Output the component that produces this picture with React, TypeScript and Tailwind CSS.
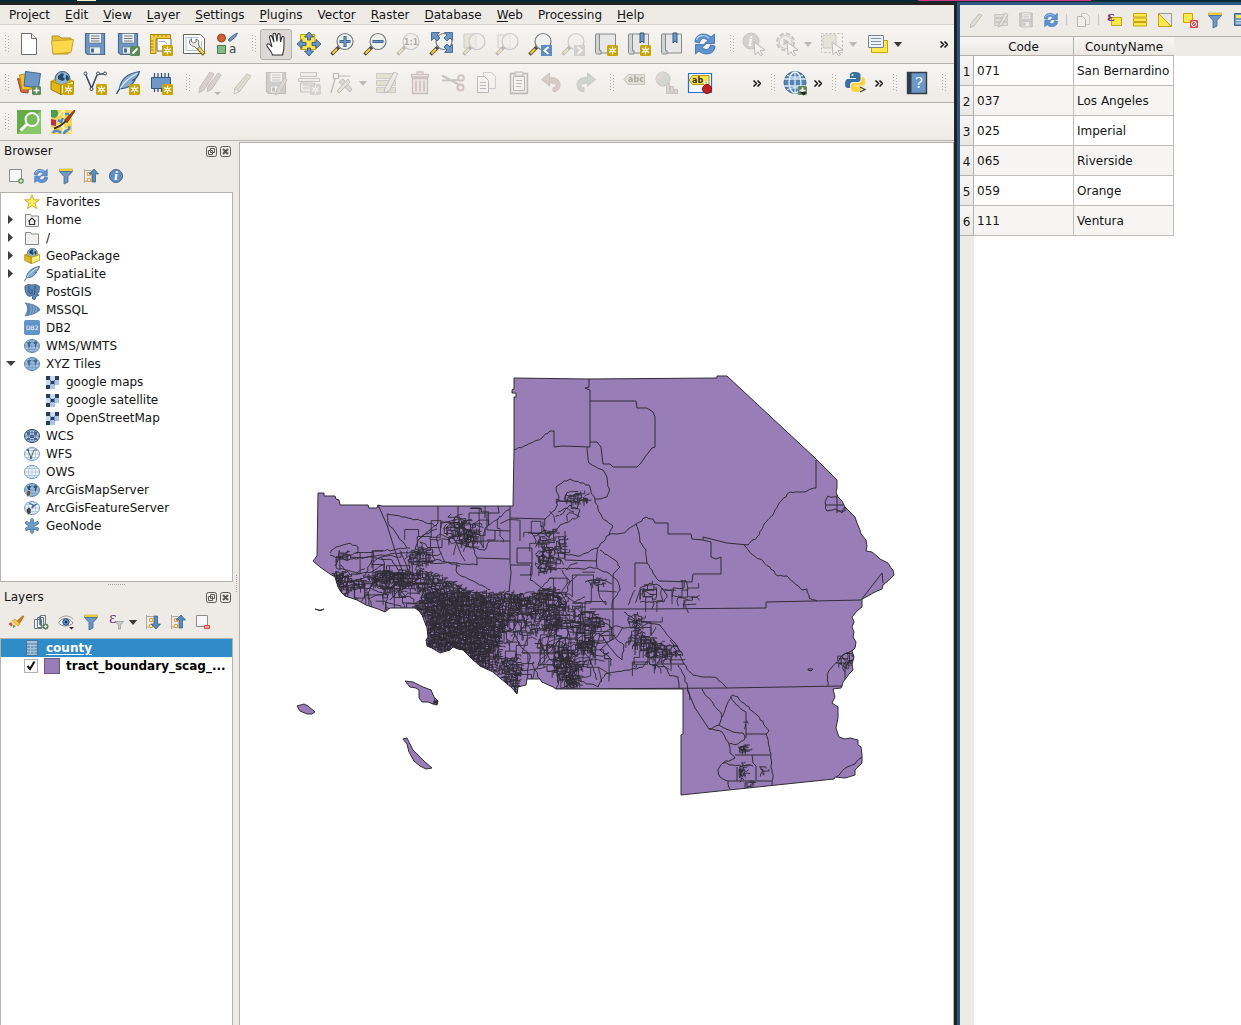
import React from "react";

type Pt = [number, number];
type Kids = { children?: React.ReactNode };

/* ---------- icon primitives ---------- */

function I({ children, s = 24 }: Kids & { s?: 24 | 16 }) {
  return (
    <svg viewBox={s === 24 ? "0 0 24 24" : "0 0 16 16"} className={"shrink-0 overflow-visible " + (s === 24 ? "size-6" : "size-4")} fill="none" aria-hidden="true">
      {children}
    </svg>
  );
}

const Star = () => (
  <g>
    <rect x="13" y="13" width="11" height="11" rx="1.5" fill="#c8a406" />
    <path d="M18.5 14.5v8M15 16.5l7 4M22 16.5l-7 4" stroke="#fff" strokeWidth="1.3" />
    <circle cx="18.5" cy="18.5" r="1.8" fill="#fff" />
    <circle cx="18.5" cy="18.5" r="0.8" fill="#c8a406" />
  </g>
);
const Plus = () => (
  <g>
    <rect x="15" y="15" width="9" height="9" rx="1.5" fill="#5a8c5a" />
    <path d="M19.5 16.5v6M16.5 19.5h6" stroke="#fff" strokeWidth="1.6" />
  </g>
);
const Lens = ({ clear }: { clear?: boolean }) => (
  <g>
    <path d="M9 15l-7.500 7.500" stroke="#4c4c4c" strokeWidth="3.600" />
    <path d="M7 17l-4.500 4.500" stroke="#fcc92b" strokeWidth="2.200" />
    <circle cx="15" cy="9.500" r="8" fill={clear ? "#f1efec" : "#eef0ee"} fillOpacity={clear ? 0.6 : 1} stroke="#777b7c" strokeWidth="1.2" />
  </g>
);
const Floppy = () => (
  <g>
    <path d="M2.500 1.500h19v21h-17l-2-2z" fill="#6d97c4" stroke="#4b6c90" strokeWidth="1.2" />
    <path d="M6 1.500h12.500v9.500h-12.500z" fill="#eef1f3" stroke="#4b6c90" strokeWidth=".6" />
    <path d="M8 4h8.500M8 6.500h8.500M8 9h8.500" stroke="#777" strokeWidth="1" />
    <path d="M6.500 15h11v7h-11z" fill="#eceeee" stroke="#4b6c90" strokeWidth=".6" />
    <path d="M8 16.500h3v4h-3z" fill="#4b6c90" />
  </g>
);
const Globe16 = ({ fill, line, land }: { fill: string; line: string; land?: string }) => (
  <g>
    <ellipse cx="8" cy="8" rx="7.5" ry="6.500" fill={fill} stroke={line} strokeWidth="1" />
    <path d="M.5 8h15M2 4.500h12M2 11.500h12M8 1.500v13" stroke={line} strokeWidth=".6" opacity=".7" />
    <ellipse cx="8" cy="8" rx="3.600" ry="6.500" stroke={line} strokeWidth=".6" opacity=".7" />
    {land && <path d="M3 5l2.500-1.500 2 1-1.500 1.500.5 2-1.500 2.500-1-3zM9.500 4l2.500-1 1.500 2-1 1.500-.5 3-1.500-1 .5-2-1.500-1z" fill={land} />}
  </g>
);
const Box = () => (
  <g>
    <circle cx="12.500" cy="8" r="7.500" fill="#8fb3d6" stroke="#375572" strokeWidth="1" />
    <path d="M8 5l4-3 2 1-1 3 2 2-2 2-3-1-2-1zM16 4l2.500 1 .5 4-2 1-1.500-3z" fill="#294866" />
    <path d="M1 10l10 4v9.500L1 18.500z" fill="#e2b814" stroke="#8b6c05" strokeWidth=".9" />
    <path d="M11 14l12.500-4v8.500L11 23.500z" fill="#fdf07b" stroke="#8b6c05" strokeWidth=".9" />
    <path d="M1 10l3.500-2c2 4 6 5 8 5l-1.500 1zM11 14l1.500-1c3-.5 6-2 7.500-5l3.500 2z" fill="#d0a60e" />
  </g>
);
const Feather = () => (
  <g>
    <path d="M.5 23C3 18 7 13 13 8" stroke="#2b4a6b" strokeWidth="1.300" />
    <path d="M23.500.5C14 2 5 7 3.500 17.500c8 .5 13-3.500 15.500-8.500l-3 .5c4-1.500 6.500-5 7.500-9z" fill="#84abd3" stroke="#375c84" strokeWidth="1.200" />
    <path d="M4 17.500C8 11 14 6 21 2.500" stroke="#e3edf6" strokeWidth="1.100" />
  </g>
);
const Pencil = () => (
  <g>
    <path d="M16 3l4 2L9 20l-6 3 1-6z" fill="#c9c38f" stroke="#666" />
    <path d="M3 23l1-5 4 2z" fill="#eee" stroke="#666" strokeWidth=".6" />
    <path d="M16 6L6 19" stroke="#8a8557" />
  </g>
);
const RefreshShape = () => (
  <g>
    <path d="M2 10C2 1 13 0 18 5l3.500-3v9.500h-10l3.500-3C10 4.500 7.500 7 6.500 11z" fill="#5c93d0" stroke="#376ba6" strokeWidth=".8" />
    <path d="M22 14c0 9-11 10-16 5l-3.500 3v-9.500h10l-3.500 3c5 4 7.500 1.500 8.500-2.500z" fill="#5c93d0" stroke="#376ba6" strokeWidth=".8" />
    <path d="M3.500 8C5 3 12 2 16 6" stroke="#b7d3ef" strokeWidth="1.2" />
  </g>
);
const Book = ({ mark }: { mark?: boolean }) => (
  <g>
    <path d="M5 2h16.500v19H5z" fill="#e6e7e6" stroke="#84898a" />
    <path d="M2 2h3.500v16.500H7V22H3c-1 0-1.500-1-1.500-2V3z" fill="#d2d4d3" stroke="#84898a" />
    {mark && <path d="M13 1h4v10l-2-2-2 2z" fill="#6d97c4" stroke="#34577f" />}
  </g>
);
const Cursor = () => <path d="M12 10l11 8-5 .8 2.500 4-2 1-2.500-4-3 3z" fill="#fff" stroke="#555" strokeWidth="1" />;
const FunnelShape = () => (
  <g>
    <path d="M1.500 1h13v2h-13z" fill="#fbe34b" stroke="#b39d1c" strokeWidth=".6" />
    <path d="M1.500 3.500h13L10 8.500V14l-4 2V8.500z" fill="#6d97c4" stroke="#41678f" strokeWidth=".8" />
  </g>
);
const Scratch = ({ up }: { up?: boolean }) => (
  <g>
    <path d="M1.500 1v14M1.500 2.500h7M1.500 13h4" stroke="#a9a9a9" />
    <path d="M4.500 4.500h3v3h-3zM4.500 10.500h3v3h-3z" fill="#fff0d8" stroke="#f09a2c" />
    {up ? (
      <path d="M11 1l4.500 5h-3v8h-3.500V6h-3z" fill="#5b8cc0" stroke="#2e537b" strokeWidth=".7" />
    ) : (
      <path d="M11 15l4.500-5h-3V2h-3.500v8h-3z" fill="#5b8cc0" stroke="#2e537b" strokeWidth=".7" />
    )}
  </g>
);

/* ---------- toolbar building blocks ---------- */

const Grip = () => (
  <svg viewBox="0 0 5 18" className="mr-1 h-[18px] w-[5px] shrink-0" aria-hidden="true">
    {[0, 3, 6, 9, 12, 15].map((y) => (
      <g key={y} fill="#b3afab">
        <rect x="1" y={y} width="1" height="1" />
        <rect x="4" y={y + 1} width="1" height="1" />
      </g>
    ))}
  </svg>
);

const Caret = ({ dim }: { dim?: boolean }) => (
  <svg viewBox="0 0 10 6" className="h-[5px] w-[10px] shrink-0" aria-hidden="true">
    <path d="M0 0h10L5 6z" fill={dim ? "#bdbab7" : "#3a3a3a"} />
  </svg>
);

function Tool({ label, off, on, menu, children }: Kids & { label: string; off?: boolean; on?: boolean; menu?: boolean }) {
  return (
    <button type="button" aria-label={label} title={label} disabled={off} className={"flex h-[33px] shrink-0 items-center " + (menu ? "w-[45px]" : "w-[33px]")}>
      <span className={"flex h-[31px] w-8 shrink-0 items-center justify-center rounded-[3px] border " + (on ? "border-[#b4b0ac] bg-[#dcd8d5]" : "border-transparent")}>
        <span className={off ? "opacity-35 saturate-50" : ""}>
          <I>{children}</I>
        </span>
      </span>
      {menu && <Caret dim={off} />}
    </button>
  );
}

const More = () => (
  <button type="button" aria-label="More tools" className="flex w-3 shrink-0 justify-center">
    <svg viewBox="0 0 8 7" className="h-[7px] w-2" fill="none" stroke="#111" strokeWidth="1.5" aria-hidden="true">
      <path d="M.5.5l3 3-3 3M4.500.5l3 3-3 3" />
    </svg>
  </button>
);

const Group = ({ children, grow }: Kids & { grow?: boolean }) => <div className={"flex items-center " + (grow ? "min-w-0 flex-1" : "shrink-0")}>{children}</div>;
const Bar = ({ children, short }: Kids & { short?: boolean }) => (
  <div className={"flex shrink-0 items-center gap-[7px] overflow-hidden border-b border-[#b5b1ad] bg-linear-to-b from-[#f7f5f2] to-[#eeebe7] pr-1 pl-1 " + (short ? "h-[38px]" : "h-[39px]")}>{children}</div>
);

function Small({ label, off, children }: Kids & { label: string; off?: boolean }) {
  return (
    <button type="button" aria-label={label} title={label} disabled={off} className={"flex h-6 w-[25px] shrink-0 items-center justify-center " + (off ? "opacity-35 saturate-50" : "")}>
      <I s={16}>{children}</I>
    </button>
  );
}

/* ---------- toolbars ---------- */

function FileBar() {
  return (
    <Bar>
      <Group>
        <Grip />
        <Tool label="New Project"><path d="M4.500 1.500h10l5 5v16h-15z" fill="#fff" stroke="#6a6a6a" /><path d="M14.500 1.500v5h5" fill="#eee" stroke="#6a6a6a" /></Tool>
        <Tool label="Open Project"><path d="M2 4h7l2 2h10v4L18 22H3z" fill="#e9bd38" stroke="#b38f23" /><path d="M1.500 9L23.500 7.500 21 20.500 3 22z" fill="#fcd94b" stroke="#caa12b" /></Tool>
        <Tool label="Save Project"><Floppy /></Tool>
        <Tool label="Save Project As"><Floppy /><rect x="14" y="14" width="10" height="10" rx="1.500" fill="#5a8c5a" /><path d="M16.500 21.500l5-5" stroke="#fff" strokeWidth="2" /></Tool>
        <Tool label="New Print Layout"><path d="M8 4h11l3 3v12H8z" fill="#fff" stroke="#666" /><path d="M1.500 2.500h20v4H7v15H1.500z" fill="#f7cf45" stroke="#a98516" /><path d="M5 3v2M9 3v2M13 3v2M17 3v2M2 9h2.500M2 12h2.500M2 15h2.500M2 18h2.500" stroke="#8b6c05" strokeWidth=".8" /><path d="M10 9.500h6l2 2.500" stroke="#9db4cc" /><Star /></Tool>
        <Tool label="Show Layout Manager"><path d="M1.500 2.500h17l4 4v15h-21z" fill="#fff" stroke="#666" /><path d="M4 5.500h13M4 18.500h12M4 5.500v13M19.500 9v8" stroke="#a9c5e8" /><path d="M14 13l8 9.500" stroke="#7a610b" strokeWidth="4" /><path d="M15 14l6.500 7.500" stroke="#f1d45b" strokeWidth="2.500" /><path d="M9.500 6.500v3l2 1.500 2.500-1v-3c2.500.5 3.500 3 2.500 5l1 3-2.500 2-2.500-2.500c-3 0-5.500-2.500-5-5 .2-1.500 1-2.500 2-3z" fill="#ecedeb" stroke="#666" strokeWidth=".9" /></Tool>
        <Tool label="Style Manager"><circle cx="6.500" cy="6" r="4" fill="#cd5c34" stroke="#a04425" /><path d="M22.500 1l-2 4-5.500 4.500-2-1.500 5.500-5z" fill="#6d97c4" stroke="#375c84" strokeWidth=".8" /><path d="M2.500 13.500h8v8h-8z" fill="#8ab88e" stroke="#4a7a50" /><text x="14" y="21" fontSize="12" fill="#444" className="font-[DejaVu_Sans]">a</text></Tool>
      </Group>
      <Group>
        <Grip />
        <Tool label="Pan Map" on><path d="M8.500 23c-1-4-4-6-5.500-9-.8-1.800 1.200-3 2.600-1.600L8 15 5.500 5.500c-.4-2 1.900-2.500 2.500-.8L10 10 9 3c-.2-2 2.500-2.300 2.800-.4L13 9.500 13.500 3c.2-2 2.600-1.800 2.600.1L16.500 10l1.300-4.500c.5-1.700 2.500-1.200 2.300.5-.8 5 1.400 8-1.600 17z" fill="#fff" stroke="#333" strokeWidth="1.100" /></Tool>
        <Tool label="Pan Map to Selection"><path d="M3.500 2.500h14l1 15h-15z" fill="#fbe34b" stroke="#c8a406" /><path d="M12 0l4.500 5h-3v3h-3V5h-3zM12 24l4.500-5h-3v-3h-3v3h-3zM0 12l5-4.500v3h4v3H5v3zM24 12l-5-4.500v3h-4v3h4v3z" fill="#6d97c4" stroke="#34577f" strokeWidth=".9" /></Tool>
        <Tool label="Zoom In"><Lens /><path d="M15 4v11M9.500 9.500h11" stroke="#34577f" strokeWidth="3" /><path d="M15 4.500v10M10 9.500h10" stroke="#6d97c4" strokeWidth="1.600" /></Tool>
        <Tool label="Zoom Out"><Lens /><path d="M9.500 9.500h11" stroke="#34577f" strokeWidth="3" /><path d="M10 9.500h10" stroke="#6d97c4" strokeWidth="1.600" /></Tool>
        <Tool label="Zoom to Native Resolution" off><Lens /><text x="8" y="13" fontSize="8" fontWeight="bold" fill="#333" className="font-[DejaVu_Sans]">1:1</text></Tool>
        <Tool label="Zoom Full"><Lens /><path d="M2.500.5h8L8 3l3 3-3 3-3-3-2.500 2.500zM23.500.5v8L21 6l-3 3-3-3 3-3-2.500-2.500zM23.500 20.500h-8L18 18l-3-3 3-3 3 3 2.500-2.500z" fill="#6d97c4" stroke="#34577f" strokeWidth=".8" /></Tool>
        <Tool label="Zoom to Selection" off><path d="M2 2h12v14H2z" fill="#d3ce9f" stroke="#888" /><Lens clear /></Tool>
        <Tool label="Zoom to Layer" off><path d="M3 3h12v13H3z" fill="#eee" stroke="#888" /><Lens clear /></Tool>
        <Tool label="Zoom Last"><Lens /><path d="M13 13h11v11H13z" fill="#5d8dc2" /><path d="M20.500 15l-4 3.500 4 3.500" stroke="#fff" strokeWidth="2" /></Tool>
        <Tool label="Zoom Next" off><Lens /><path d="M13 13h11v11H13z" fill="#999" /><path d="M16.500 15l4 3.500-4 3.500" stroke="#fff" strokeWidth="2" /></Tool>
        <Tool label="New Map View"><Book /><Star /></Tool>
        <Tool label="New Spatial Bookmark"><Book mark /><Star /></Tool>
        <Tool label="Show Spatial Bookmarks"><Book mark /></Tool>
        <Tool label="Refresh"><RefreshShape /></Tool>
      </Group>
      <Group>
        <Grip />
        <Tool label="Identify Features" off><circle cx="9" cy="9" r="8" fill="#999" stroke="#777" /><text x="6" y="14" fontSize="13" fontStyle="italic" fontWeight="bold" fill="#fff" className="font-[DejaVu_Serif]">i</text><Cursor /></Tool>
        <Tool label="Run Feature Action" off menu><circle cx="10.500" cy="10" r="8.500" stroke="#777" strokeWidth="2" strokeDasharray="4.500 2.200" fill="#e6e6e6" /><circle cx="10.500" cy="10" r="6.500" fill="#e6e6e6" stroke="#777" /><path d="M8.500 6.500l6 3.500-6 3.500z" fill="#777" /><Cursor /></Tool>
        <Tool label="Select Features" off menu><path d="M1.500 1.500h21v19h-21z" stroke="#555" strokeDasharray="2 2" /><path d="M3 3h13v13H3z" fill="#d3ce9f" stroke="#888" /><Cursor /></Tool>
        <Tool label="Map Tips" menu><path d="M6.500 8.500h16v12h-16z" fill="#fde94b" stroke="#c8a406" /><path d="M3.500 3.500h15v12h-15z" fill="#eef2f5" stroke="#7b8590" /><path d="M6 6.500h10M6 9.500h10M6 12.500h10" stroke="#8293a3" /></Tool>
      </Group>
      <div className="ml-auto"><More /></div>
    </Bar>
  );
}

function EditBar() {
  return (
    <Bar>
      <Group>
        <Grip />
        <Tool label="Data Source Manager"><path d="M.5 7.500L12 10l-1 12-7-1z" fill="#d9643a" stroke="#a04425" /><path d="M2.500 4L15 2l1 16-11 1z" fill="#f4c22d" stroke="#b38f23" /><path d="M8.500.5l15 2L21.500 17 7 15z" fill="#6d97c4" stroke="#41678f" /><Plus /></Tool>
        <Tool label="New GeoPackage Layer"><Box /><Star /></Tool>
        <Tool label="New Shapefile Layer"><path d="M2.500 3l6 14.500L14 4M14 3h8" stroke="#34495e" strokeWidth="1.500" /><g fill="#fff" stroke="#34495e"><circle cx="2.500" cy="2.500" r="1.500" /><circle cx="8.500" cy="18" r="1.500" /><circle cx="15" cy="2.500" r="1.500" /><circle cx="22" cy="2.500" r="1.500" /></g><Star /></Tool>
        <Tool label="New SpatiaLite Layer"><Feather /><Star /></Tool>
        <Tool label="New Temporary Scratch Layer"><path d="M5.500 2v19M9 2v19M12.500 2v19M16 2v19M19.500 2v19" stroke="#34577f" strokeWidth="1.300" /><path d="M2.500 6.500h19v11h-19z" fill="#6d97c4" stroke="#34577f" /><Star /></Tool>
      </Group>
      <Group>
        <Grip />
        <Tool label="Current Edits" off><path d="M12 1l4 2L6 19l-5 3 1-6z" fill="#b78f8f" stroke="#666" /><path d="M20 2l3 2-9 14-5 3 1-6z" fill="#b78f8f" stroke="#666" /><path d="M16 21h7l-3.500 3z" fill="#444" /></Tool>
        <Tool label="Toggle Editing" off><Pencil /></Tool>
        <Tool label="Save Layer Edits" off><g className="grayscale"><Floppy /></g><path d="M20 7l3 2-7 13-5 2 2-6z" fill="#c9a38f" stroke="#666" /></Tool>
        <Tool label="Add Feature" off><path d="M3.500 1.500h16v4h-16zM1.500 7.500h21v3h-21zM3.500 12h14v9h-14z" fill="#e5e4d6" stroke="#777" /><path d="M6 14h9M6 17h9" stroke="#777" /><g className="grayscale"><Star /></g></Tool>
        <Tool label="Vertex Tool" off menu><path d="M3.500 2.500h5v5h-5zM8.500 5h12M5 8L1 22" stroke="#555" strokeWidth="1.200" /><path d="M9 11l4-3 9 10-2 3z" fill="#aaa" stroke="#666" /><path d="M18 8l2 3-11 11-2-2z" fill="#d3ce9f" stroke="#666" /></Tool>
        <Tool label="Modify Attributes" off><path d="M1.500 2.500h19v5h-19zM1.500 9.500h19v5h-19zM1.500 16.500h19v5h-19z" fill="#c9c38f" stroke="#888" /><path d="M19 1l4 2-9 17-5 2 1-5z" fill="#ddd" stroke="#666" /></Tool>
        <Tool label="Delete Selected" off><path d="M4.500 7.500h15v15h-15zM3.500 3.500h17v2.500h-17zM9 3V1h6v2" fill="#ecd5d5" stroke="#99636a" strokeWidth="1.300" /><path d="M8 9.500v11M12 9.500v11M16 9.500v11" stroke="#99636a" strokeWidth="1.600" /></Tool>
        <Tool label="Cut Features" off><path d="M1 4.500l17 9M1 9.500L17 9" stroke="#777" strokeWidth="2.200" /><circle cx="20" cy="7" r="2.800" stroke="#a36e6e" strokeWidth="2" /><circle cx="19.500" cy="16.500" r="3" stroke="#a36e6e" strokeWidth="2" /></Tool>
        <Tool label="Copy Features" off><path d="M9.500 1.500h8l4 4v12h-12z" fill="#f4f4f4" stroke="#888" /><path d="M3.500 5.500h7l4 4v12h-11z" fill="#f8f8f8" stroke="#555" /><path d="M6 11.500h6M6 14.500h6M6 17.500h6" stroke="#555" /></Tool>
        <Tool label="Paste Features" off><path d="M3.500 2.500h17v20h-17z" fill="#dededb" stroke="#555" strokeWidth="1.400" /><path d="M6.500 5.500h11v14h-11z" fill="#f8f8f8" stroke="#555" /><path d="M8 1h8v4H8zM9 9.500h6M9 12.500h6M9 15.500h5" fill="#ddd" stroke="#555" /></Tool>
        <Tool label="Undo" off><path d="M1.500 8.500l8-6.500V6.500c8-.5 11 4 10.500 8-.5 5-4 6.500-7 6v-4c2 .5 3-.5 3-2-.5-2-3-2.500-6.500-2.500V15z" fill="#bd8378" stroke="#9d665c" /></Tool>
        <Tool label="Redo" off><path d="M22.500 8.500l-8-6.500V6.500c-8-.5-11 4-10.500 8 .5 5 4 6.500 7 6v-4c-2 .5-3-.5-3-2 .5-2 3-2.500 6.500-2.500V15z" fill="#86a195" stroke="#6d877b" /></Tool>
      </Group>
      <Group grow>
        <Grip />
        <Tool label="Layer Labeling Options" off><path d="M2 8.500l4-5h16.500v10H6z" fill="#c9c38f" stroke="#777" /><text x="6" y="11" fontSize="8" fontWeight="bold" fill="#222" className="font-[DejaVu_Sans]">abc</text></Tool>
        <Tool label="Layer Diagram Options" off><circle cx="8" cy="8" r="7" fill="#8fae95" stroke="#777" /><path d="M8 8V1a7 7 0 0 0-6 10z" fill="#d0a09a" /><path d="M11.500 12.500h3v10h-3zM15.500 15.500h3v7h-3zM19.500 18.500h3v4h-3z" fill="#c9a09a" stroke="#777" /></Tool>
        <Tool label="Pin or Unpin Labels"><path d="M.5 2.500h23v19H.5z" fill="#f5f8fc" stroke="#2372d5" strokeWidth="1.200" /><path d="M1 9L4.500 4.500H21v9H4.500z" fill="#fbe34b" stroke="#b3990f" /><text x="4" y="12" fontSize="8" fontWeight="bold" fill="#333" className="font-[DejaVu_Sans]">ab</text><path d="M18 9.500v6" stroke="#fff" strokeWidth="3" /><path d="M18 9.500v6" stroke="#999" /><circle cx="19" cy="18" r="4.500" fill="#c02020" stroke="#8b1212" /></Tool>
        <div className="ml-auto"><More /></div>
      </Group>
      <Group>
        <Grip />
        <Tool label="MetaSearch"><circle cx="12" cy="11.500" r="11" fill="#5585b8" stroke="#41678f" /><path d="M1 8h22M1 15h22M12 1v21M4 4c5 3 11 3 16 0M4 19c5-3 11-3 16 0" stroke="#dce8f3" strokeWidth="1.300" /><ellipse cx="12" cy="11.500" rx="6" ry="10.500" stroke="#e8eff6" strokeWidth="1.300" /><Plus /><path d="M17 21h7l-3.500 3.500z" fill="#222" /></Tool>
        <More />
      </Group>
      <Group>
        <Grip />
        <Tool label="Python Console"><path d="M11 1c-5 0-5 2-5 3v3h6v1H4c-2 0-3 2-3 5s1 4 3 4h2v-3c0-2 1-3 3-3h5c1.500 0 2.500-1 2.500-2.500V4c0-2-2-3-5.500-3z" fill="#3771a2" /><circle cx="8.500" cy="4" r="1" fill="#fff" /><path d="M12 21c5 0 5-2 5-3v-2.500h-6v-1h8c2 0 2-2 2-4.500s-1-4-2-4h-1.500v3c0 2-1 3-3 3h-5C8 12 7 13 7 14.500V18c0 2 2 3 5 3z" fill="#fdd33e" /><path d="M16 16l5 2.500-5 2.500" stroke="#444" strokeWidth="1.300" /></Tool>
        <More />
      </Group>
      <Group>
        <Grip />
        <Tool label="Help Contents"><path d="M2.500 1.500h19v21h-19z" fill="#6d97c4" stroke="#353d46" strokeWidth="1.400" /><path d="M2.500 1.500h4v21h-4z" fill="#2e3d4c" /><text x="10" y="17" fontSize="15" fill="#fff" className="font-[DejaVu_Serif]">?</text></Tool>
      </Group>
      <Grip />
    </Bar>
  );
}

function PluginBar() {
  return (
    <Bar short>
      <Group>
        <Grip />
        <Tool label="QuickMapServices Search"><path d="M0 0h24v24H0z" fill="#64aa48" /><path d="M0 24L24 0v24z" fill="#86c767" /><path d="M10.500 13.500l-7 7" stroke="#fff" strokeWidth="3" /><circle cx="15" cy="9.500" r="6.500" fill="#79b95c" stroke="#fff" strokeWidth="2" /></Tool>
        <Tool label="OpenStreetMap Plugin"><path d="M1 0h21v24H1z" fill="#f8d454" /><path d="M1 0h6l2 5-4 3-4-1z" fill="#4a9e50" /><path d="M1 9l5 1v6l-5-1z" fill="#b72d54" /><path d="M8 6l5-6M1 20l8-5 13 8M14 0l-1 24" stroke="#fff3b8" strokeWidth="1.500" /><path d="M8 10l3 2 2-4M3 23c2-4 6-2 8 0M14 24c0-5 7-2 5-8M15 4h4" stroke="#4d89d8" strokeWidth="2.500" /><path d="M24.500 0L14.500 10l2.500 2.500L25 1z" fill="#a8481a" stroke="#7c2e0a" /><path d="M16 11l-6 5-6 2.500" stroke="#3c3530" strokeWidth="2" /></Tool>
      </Group>
    </Bar>
  );
}

/* ---------- menu ---------- */

const MENU: [string, string, string][] = [
  ["Pro", "j", "ect"], ["", "E", "dit"], ["", "V", "iew"], ["", "L", "ayer"], ["", "S", "ettings"], ["", "P", "lugins"],
  ["Vect", "o", "r"], ["", "R", "aster"], ["", "D", "atabase"], ["", "W", "eb"], ["Pro", "c", "essing"], ["", "H", "elp"],
];

/* ---------- left panels ---------- */

function PanelTitle({ children }: Kids) {
  return (
    <div className="flex h-[21px] shrink-0 items-center pr-0.5 pl-1">
      <h2 className="flex-1">{children}</h2>
      <div className="flex gap-[3px]">
        <button type="button" aria-label="Float panel">
          <svg viewBox="0 0 11 11" className="size-[11px]" fill="none" stroke="#5c5955" aria-hidden="true"><rect x=".5" y=".5" width="10" height="10" rx="2" /><path d="M4.500 2.500h4v4h-4zM2.500 4.500h4v4h-4z" /></svg>
        </button>
        <button type="button" aria-label="Close panel">
          <svg viewBox="0 0 11 11" className="size-[11px]" fill="none" stroke="#5c5955" aria-hidden="true"><rect x=".5" y=".5" width="10" height="10" rx="2" /><path d="M3 3l5 5M8 3l-5 5" strokeWidth="2" /></svg>
        </button>
      </div>
    </div>
  );
}

const Tiles = () => (
  <svg viewBox="0 0 13 13" className="size-[13px] shrink-0" aria-hidden="true">
    <path d="M0 0h13v13H0z" fill="#a9c4e6" />
    <path d="M5 0h4v4H5zM0 4h5v5H0z" fill="#c9dcf2" />
    <path d="M0 0h4v4H0zM9 0h4v4H9zM0 9h4v4H0zM5 5h3v3H5z" fill="#2c3e50" />
    <path d="M9 9h4v4H9z" fill="#fff" />
    <path d="M4 4h1v5H4zM8 4h1v5H8z" fill="#6d8fb5" />
  </svg>
);

const BLUE = "#9dbfe0";
const NODES: { t: string; icon: React.ReactNode; arrow?: "r" | "d"; child?: boolean }[] = [
  { t: "Favorites", icon: <I s={16}><path d="M8 .8l2 5h5.300l-4.300 3.400 1.600 5.500L8 11.500l-4.600 3.200L5 9.200.7 5.800H6z" fill="#fdee5a" stroke="#c8a72c" strokeWidth=".9" /></I> },
  { t: "Home", arrow: "r", icon: <I s={16}><path d="M1.500 2.500h5l1 1.500h7v10.500h-13z" fill="#f1f1f1" stroke="#8b8b8b" /><path d="M4.500 9.500L8 6l3.500 3.500M5.500 9v3.500h5V9" stroke="#333" strokeWidth="1.200" /></I> },
  { t: "/", arrow: "r", icon: <I s={16}><path d="M1.500 2.500h5l1 1.500h7v10.500h-13z" fill="#f1f1f1" stroke="#8b8b8b" /></I> },
  { t: "GeoPackage", arrow: "r", icon: <svg viewBox="0 0 24 24" className="size-4 shrink-0" fill="none" aria-hidden="true"><Box /></svg> },
  { t: "SpatiaLite", arrow: "r", icon: <svg viewBox="0 0 24 24" className="size-4 shrink-0" fill="none" aria-hidden="true"><Feather /></svg> },
  { t: "PostGIS", icon: <I s={16}><path d="M1 2l3-1.500 4 .5 4-.5 3.500 2-.5 5-2 3 2 .5-3 1.500-1 3-2.500-.5-.5-4-2 1.500-2.500-1C1.500 9 .5 5 1 2z" fill="#5d88b5" stroke="#34577f" strokeWidth=".8" /><path d="M5 2v6l2 2M11 2v5l-1 4M8 5v5" stroke="#2d4d72" strokeWidth=".9" /></I> },
  { t: "MSSQL", icon: <I s={16}><path d="M1 1c3 2 3.500 8 0 13 7-1 12-3 15-6-2-4-7-6-15-7z" fill="#5d88b5" stroke="#41678f" strokeWidth=".6" /><path d="M6 2.500c2 3 1.500 7-.5 10M9 3.500c1.500 2.500 1 5.500-.5 8M12 5c1 2 .5 3.500-.5 5.500" stroke="#b9d0e8" strokeWidth=".6" /></I> },
  { t: "DB2", icon: <I s={16}><rect x="0" y="0" width="16" height="15" rx="2" fill="#6394c8" /><text x="2" y="10" fontSize="6" fill="#fff" className="font-[DejaVu_Sans]">DB2</text></I> },
  { t: "WMS/WMTS", icon: <I s={16}><Globe16 fill={BLUE} line="#5b84ae" land="#46698e" /></I> },
  { t: "XYZ Tiles", arrow: "d", icon: <I s={16}><Globe16 fill={BLUE} line="#5b84ae" land="#46698e" /></I> },
  { t: "google maps", child: true, icon: <Tiles /> },
  { t: "google satellite", child: true, icon: <Tiles /> },
  { t: "OpenStreetMap", child: true, icon: <Tiles /> },
  { t: "WCS", icon: <I s={16}><Globe16 fill="#a9c4e6" line="#2d4763" /><path d="M3 3.500h3V7H3zM10 3.500h3V7h-3zM6 7h4v3H6zM3 10h3v2H3zM10 10h3v2h-3z" fill="#4a6a8f" /></I> },
  { t: "WFS", icon: <I s={16}><Globe16 fill="#f2f7fc" line="#6f9dcf" /><path d="M4 4l3 8 3-8h3" stroke="#666" /><circle cx="4" cy="4" r="1" fill="#555" /><circle cx="7" cy="12" r="1" fill="#555" /></I> },
  { t: "OWS", icon: <I s={16}><Globe16 fill="#f2f7fc" line="#6f9dcf" /></I> },
  { t: "ArcGisMapServer", icon: <I s={16}><Globe16 fill={BLUE} line="#5b84ae" land="#34536f" /><path d="M2 10l3-2 2 2-1 4-3 .5z" fill="#555" stroke="#ddd" strokeWidth=".6" /></I> },
  { t: "ArcGisFeatureServer", icon: <I s={16}><Globe16 fill="#f2f7fc" line="#6f9dcf" /><path d="M5 3l4 2-1 3 3-3 2-1" stroke="#46698e" strokeWidth="1.200" /><path d="M2 10l3-3 2 2v4l-3 2z" fill="#444" stroke="#ddd" strokeWidth=".6" /></I> },
  { t: "GeoNode", icon: <I s={16}><path d="M8 2v12M2.800 5l10.400 6M13.200 5L2.800 11" stroke="#41678f" strokeWidth="3.600" strokeLinecap="round" /><path d="M8 2v12M2.800 5l10.400 6M13.200 5L2.800 11" stroke="#6d9bcb" strokeWidth="2.600" strokeLinecap="round" /></I> },
];

function Browser() {
  return (
    <section className="flex shrink-0 flex-col">
      <PanelTitle>Browser</PanelTitle>
      <div className="flex h-[30px] items-center pb-0.5 pl-[3px]">
        <Small label="Add Selected Layers"><path d="M1.500 1.500h12v12h-12z" fill="#f7f7f7" stroke="#8b8b8b" /><circle cx="13" cy="13" r="2.800" fill="#5a8c5a" /><path d="M13 11.500v3M11.500 13h3" stroke="#fff" /></Small>
        <Small label="Refresh"><g transform="scale(.667)"><RefreshShape /></g></Small>
        <Small label="Filter Browser"><FunnelShape /></Small>
        <Small label="Collapse All"><Scratch up /></Small>
        <Small label="Enable Properties Widget"><circle cx="8" cy="8" r="6.500" fill="#5d8fc6" stroke="#41678f" /><text x="6" y="12" fontSize="11" fontStyle="italic" fontWeight="bold" fill="#fff" className="font-[DejaVu_Serif]">i</text></Small>
      </div>
      <ul className="h-[390px] overflow-hidden border border-[#b5b1ad] bg-white">
        {NODES.map((n) => (
          <li key={n.t} className={"flex h-[18px] items-center " + (n.child ? "gap-[7px] pl-[45px]" : "gap-[6px] pl-[7px]")}>
            {!n.child && (
              <svg viewBox="0 0 10 10" className="size-[10px] shrink-0 overflow-visible" fill="#3e3e3e" aria-hidden="true">
                {n.arrow === "r" && <path d="M0 0l5 4.500L0 9z" />}
                {n.arrow === "d" && <path d="M-2 2h9.500L3 7z" />}
              </svg>
            )}
            {n.icon}
            <span>{n.t}</span>
          </li>
        ))}
      </ul>
    </section>
  );
}

function Layers() {
  return (
    <section className="flex min-h-0 flex-1 flex-col">
      <PanelTitle>Layers</PanelTitle>
      <div className="flex h-[30px] shrink-0 items-center pb-0.5 pl-[3px]">
        <Small label="Open Layer Styling Panel"><path d="M15.500 2L10 7l1.500 1.500z" stroke="#c07f24" strokeWidth="2" /><path d="M7 5l5 5-2 2-6-5z" fill="#f2c84b" stroke="#b7892b" strokeWidth=".6" /><path d="M4 6.500L1 8.500 5 14l4-2z" fill="#f5dfa8" /><path d="M3 8l-2.500 2 3 2.500 1-2z" fill="#d9483a" /><path d="M5 11l3 1-3 2z" fill="#4a9e50" /></Small>
        <Small label="Add Group"><path d="M1.500 5.500h7v9h-7zM4.500 3.500h6v10h-6zM7.500 1.500h5v10h-5z" fill="#eef1f3" stroke="#6c7780" /><path d="M7 2v9" stroke="#41678f" strokeWidth="1.400" /><circle cx="12.500" cy="12.500" r="3" fill="#5a8c5a" /><path d="M12.500 11v3M11 12.500h3" stroke="#fff" /></Small>
        <Small label="Manage Map Themes"><path d="M.5 9C4 3 11 3 15 9c-4 4-11 4-14.500 0z" fill="#f4f4f4" stroke="#888" /><circle cx="8" cy="8" r="3.200" fill="#5d8fc6" stroke="#2e537b" /><circle cx="8" cy="8" r="1.200" fill="#16283c" /><path d="M1 5c4-4 10-4 14 0" stroke="#999" /><path d="M11 13h5l-2.500 2.500z" fill="#222" /></Small>
        <Small label="Filter Legend"><FunnelShape /></Small>
        <Small label="Filter Legend by Expression"><text x="1" y="9" fontSize="15" fill="#6d3c74" className="font-[DejaVu_Serif]">ε</text><path d="M7.500 7.500h8l-3 3.500v4h-2v-4z" fill="#ccc" stroke="#999" strokeWidth=".8" /></Small>
        <Caret />
        <div className="w-0.5" />
        <Small label="Expand All"><Scratch /></Small>
        <Small label="Collapse All"><Scratch up /></Small>
        <Small label="Remove Layer"><path d="M1.500 1.500h11v11h-11z" fill="#f7f7f7" stroke="#8b8b8b" /><rect x="9" y="11" width="6" height="4" rx="1" fill="#e0474c" /><path d="M10 13h4" stroke="#fff" /></Small>
      </div>
      <ul className="min-h-0 flex-1 border border-b-0 border-[#b5b1ad] bg-white font-bold">
        <li className="flex h-[18px] items-center gap-[6px] bg-[#308cc6] pl-[23px] text-white">
          <I s={16}><path d="M2.500.5h11v15h-11z" fill="#a3c4dc" stroke="#4b7592" /><path d="M2.500 4h11M2.500 7h11M2.500 10h11M2.500 13h11" stroke="#4b7592" /><path d="M6.500 4v11M10 4v11" stroke="#a3c4dc" /></I>
          <span className="underline underline-offset-2">county</span>
        </li>
        <li className="h-[18px]">
          <label className="flex h-[18px] items-center pl-[23px] text-black">
            <input type="checkbox" defaultChecked className="peer sr-only" />
            <span className="flex size-[14px] shrink-0 items-center justify-center border border-[#b5b1ad] bg-white peer-checked:*:visible">
              <svg viewBox="0 0 10 10" className="invisible size-[10px]" fill="none" stroke="#111" strokeWidth="2" aria-hidden="true"><path d="M1.500 5l2.500 3 4.500-7.500" /></svg>
            </span>
            <span className="ml-[6px] size-4 shrink-0 border border-[#6f5a87] bg-[#987db7]" />
            <span className="ml-[6px] truncate">tract_boundary_scag_...</span>
          </label>
        </li>
      </ul>
    </section>
  );
}

/* ---------- map ---------- */

const LAND =
  "M318 493L324 493 324 496 335 496 336 499 339 500 340 505 368 505 369 508 377 508 378 505 382 506 513 506 514 450 514 397 516 397 516 393 512 393 512 390 514 389 514 378 588 379 717 378 717 376 727 376 815 458 837 480 837 488 836 492 838 497 842 501 845 507 849 511 855 517 857 523 860 530 861 534 866 540 867 546 866 551 872 552 877 556 880 559 884 561 888 563 891 568 893 570 894 575 889 580 883 585 882 589 877 591 873 593 868 596 862 599 862 607 857 611 852 617 854 622 852 627 854 632 853 637 856 642 855 648 852 651 854 657 852 664 853 670 849 674 847 677 843 682 842 686 841 688 833 689 835 697 832 703 838 707 838 718 836 728 839 737 845 739 850 738 858 740 858 745 861 747 862 755 862 763 855 770 855 775 845 778 835 777 834 779 681 795 681 735 683 734 683 689 556 689 553 687 542 682 540 679 527 679 526 685 518 687 517 694 512 688 500 678 493 672 480 666 470 657 463 650 458 649 453 647 450 650 440 653 432 648 427 646 426 640 428 637 427 628 422 615 419 611 415 608 400 608 390 608 385 612 378 609 366 605 357 600 345 596 341 592 338 587 335 577 330 574 320 567 313 561 317 556Z";

const ISLES =
  "M405 681L413 682 423 687 431 690 434 697 438 701 437 705 433 704 428 702 422 702 419 698 419 690 416 688 410 687ZM403 739L407 738 409 742 413 750 420 757 425 762 432 768 426 769 420 766 414 761 409 752 407 744ZM297 706L304 704 308 706 315 712 312 714 307 714 300 711Z";

const STRAIGHT =
  "M510 506V562L511 573 509 592M378 505L387 525 397 557 404 575" +
  "M589 379V387L585 388 590 390V447L562 446 554 447V431H550" +
  "M590 401H636L637 408H647L653 412 655 417V447L652 448 645 457 641 463 637 467H613L610 464 603 464 601 447 597 442H590" +
  "M655 523H668V534H691L692 539 703 540 711 542V557L716 559 721 557V574H693L692 582 659 581M647 563H635V587M703 540V537L727 543 748 545" +
  "M590 609H650L766 608V602L861 600 882 573M883 583L882 573M816 460V488M836 663H853M845 663V684M556 689L727 688 842 686" +
  "M808 669H813L811 671 808 670ZM687 689L695 708 709 729M746 712V738M766 734H746M735 755H771M752 755L753 763 756 766V780M728 781H772M737 781V767" +
  "M438 506V523M458 506V520M498 506L499 513H469V524M487 514V530L510 531M472 541H510M510 518L545 519M477 558L510 559" +
  "M520 520V541M517 548H532V563H517ZM565 531V560L597 561M511 565H530M635 625V655M657 664H684M613 610V640M613 609V575" +
  "M485 506V518M495 530V540H487M372 551V568M383 551H372M640 640H655V652M528 533H560M532 563V575H520M837 495V513M825 505H845V511H837";

const ROUGH = [
  "M550 431L542 438 527 445 514 450",
  "M587 447L589 463 603 470 607 477 609 492 607 497 595 499",
  "M545 519L555 510 559 497 556 487 562 483 570 479 580 483 589 485 591 493 595 500 598 509 602 517 613 526 609 535 597 548 597 567",
  "M609 535L624 533 636 524 646 517 653 519 655 523M659 581L652 570 647 563 646 550 640 542 639 533 636 524",
  "M748 545L757 537 765 523 773 515 778 505 790 492 807 491 816 488",
  "M744 545L753 555 763 561 778 576 787 576 802 590 807 589 809 598 817 601",
  "M828 686L828 672 840 658 855 648",
  "M670 640L684 664 693 675 703 677 717 678 727 688M663 665L668 672 670 676 678 677 679 688M678 665L685 678 690 700",
  "M598 687L605 674 630 670 643 667 650 655M560 689L575 680 590 684 598 687M613 575L620 567 615 560 600 550",
  "M709 729L722 732 729 744 730 753 735 758M702 689L713 703 722 715 719 725 709 729M719 725L733 732 743 733 745 738 738 744 729 744",
  "M722 717L731 696 733 695 738 697 757 715 769 731 766 734M731 697L742 710 746 712M766 734L771 754 772 770 773 778 772 785M723 763L733 765 753 766M735 758L723 763 718 770 720 777 728 781L730 789",
  "M836 777L847 767 855 764 862 757M837 497L828 496 825 502 827 511 835 509 842 513 845 507",
  "M387 514L393 515 405 517 423 521 437 526M387 514L388 523 398 536 407 548",
  "M430 563L457 563 477 565 477 558 473 548M415 550L418 540 425 534 437 529M457 563L457 573 477 583 490 590M372 551L393 550 410 548M330 553L336 547 343 545 350 543 358 547 358 553 348 556 338 558",
  "M372 560L365 575M350 557L372 557 392 560 398 570 410 570M340 565L350 575 372 572 385 564M330 555L345 560 372 556 400 553M335 566L338 560",
  "M545 519L544 530 548 537 560 525 578 517 580 510 570 505 560 515M558 512L566 508 574 512",
  "M550 569L582 569 590 567 597 568 607 572 617 580 620 590 613 600 612 609",
  "M532 565L530 580 545 590M562 570L570 582 565 595 575 602 585 597M585 582L600 580 612 584M597 548L580 556 560 553",
  "M515 595L520 610 513 630 520 645 530 655 527 679M545 660L535 670 540 679M590 612L600 620 612 628 612 640 600 650 612 660",
  "M613 628L600 635 590 665M624 612L635 620 660 625 672 640 683 655M577 640L590 660 597 680M600 634L608 645 622 660M622 660L624 645 612 634",
  "M438 523L430 530 420 538M465 541L470 548 485 550 490 541M404 575L400 590 390 600M350 590L370 588 385 594 400 588M415 562L440 560 460 566",
  "M640 600L640 588 650 583 660 586 667 595 664 602 640 602M672 596L673 588 684 588 684 582M684 600L684 608M635 590L628 605M622 628L640 628 650 622",
];

type Patch = { p: Pt[]; c: number; k: number; n?: number };
const oval = (cx: number, cy: number, rx: number, ry: number, c: number, k = 0.8, n = 1): Patch => ({
  c, k, n,
  p: Array.from({ length: 12 }, (_, i) => {
    const a = (i * Math.PI) / 6;
    const w = i % 2 ? 1.1 : 0.9;
    return [cx + Math.cos(a) * rx * w, cy + Math.sin(a) * ry * w] as Pt;
  }),
});

const PATCHES: Patch[] = [
  { c: 3.1, k: 0.9, n: 2, p: [[398, 572], [420, 568], [440, 575], [458, 584], [470, 592], [520, 592], [530, 600], [515, 612], [505, 622], [500, 636], [500, 650], [496, 672], [480, 668], [463, 652], [426, 650], [426, 620], [412, 606], [424, 594], [412, 586], [399, 582]] },
  { c: 3.7, k: 0.85, n: 2, p: [[424, 592], [468, 592], [500, 602], [500, 640], [480, 664], [450, 652], [426, 645]] },
  { c: 3, k: 0.9, n: 2, p: [[500, 658], [518, 654], [521, 668], [519, 680], [517, 694], [498, 677]] },
  { c: 5, k: 0.75, n: 2, p: [[515, 595], [548, 586], [562, 594], [572, 606], [596, 612], [600, 624], [580, 630], [556, 628], [530, 634], [503, 640], [500, 622]] },
  { c: 4, k: 0.8, n: 2, p: [[530, 592], [550, 587], [562, 598], [562, 612], [545, 618], [520, 615]] },
  { c: 7, k: 0.75, n: 2, p: [[545, 625], [598, 625], [596, 655], [580, 660], [578, 685], [560, 684], [545, 662], [532, 648]] },
  { c: 5, k: 0.75, n: 2, p: [[370, 575], [400, 570], [412, 590], [400, 594], [372, 588]] },
  { c: 8, k: 0.75, n: 2, p: [[345, 575], [375, 568], [400, 575], [420, 608], [385, 610], [345, 596]] },
  { c: 12, k: 0.7, n: 1, p: [[330, 550], [365, 552], [400, 550], [430, 565], [400, 580], [340, 582]] },
  { c: 9, k: 0.7, n: 1, p: [[500, 635], [530, 630], [545, 660], [540, 684], [520, 684], [518, 655], [500, 652]] },
  oval(342, 583, 9, 12, 3, 0.85, 2),
  oval(336, 578, 6, 7, 3, 0.8, 2),
  oval(418, 557, 13, 9, 3.6, 0.85, 2),
  oval(427, 548, 14, 10, 8, 0.7, 1),
  oval(358, 582, 8, 5, 3.6, 0.8, 2),
  oval(385, 576, 18, 6, 3.6, 0.8, 2),
  oval(342, 554, 8, 5, 4.5, 0.85, 1),
  oval(452, 523, 12, 8, 4, 0.8, 1),
  oval(460, 530, 18, 11, 4.5, 0.8, 2),
  oval(468, 538, 10, 8, 3.8, 0.8, 2),
  oval(475, 528, 30, 22, 10, 0.75),
  oval(432, 538, 28, 18, 11, 0.75),
  oval(551, 548, 14, 20, 5, 0.8, 2),
  oval(543, 560, 9, 14, 4, 0.8, 2),
  oval(536, 534, 11, 14, 6.5, 0.85),
  oval(577, 498, 13, 5, 3.5, 0.85, 2),
  oval(565, 505, 17, 13, 8, 0.7),
  oval(586, 645, 8, 9, 3, 0.85, 2),
  oval(563, 662, 12, 18, 4, 0.8, 2),
  oval(572, 680, 7, 8, 3, 0.85, 2),
  oval(553, 622, 9, 6, 3.2, 0.85, 2),
  oval(592, 622, 10, 7, 3.6, 0.85, 2),
  oval(572, 588, 34, 22, 12, 0.8),
  oval(596, 582, 9, 4, 3.5, 0.85),
  oval(570, 645, 34, 40, 10, 0.8),
  oval(602, 638, 22, 28, 14, 0.6),
  oval(635, 620, 8, 6, 3.4, 0.85, 2),
  oval(636, 637, 10, 9, 4.5, 0.8, 2),
  oval(645, 643, 12, 8, 3.8, 0.8, 2),
  oval(662, 651, 18, 8, 4, 0.8, 2),
  oval(654, 656, 24, 13, 7, 0.8),
  oval(642, 645, 22, 24, 13, 0.7),
  oval(652, 594, 17, 12, 8, 0.85),
  oval(683, 592, 11, 14, 7, 0.85),
  oval(645, 592, 8, 7, 5, 0.85),
  oval(847, 659, 9, 8, 4.4, 0.85, 2),
  oval(743, 748, 5, 4, 3, 0.85, 2),
  oval(741, 770, 4, 8, 3, 0.85, 2),
  oval(762, 769, 4, 5, 3.5, 0.85),
  oval(749, 785, 4, 4, 3, 0.85, 2),
  oval(746, 724, 3, 4, 3, 0.7),
  oval(435, 702, 3, 4, 2.5, 0.9, 2),
];

const noise = (a: number, b: number, n: number) => {
  const v = Math.sin(a * 127.1 + b * 311.7 + n * 74.7) * 43758.5453;
  return v - Math.floor(v);
};
const inside = (x: number, y: number, p: Pt[]) => {
  let r = false;
  for (let i = 0, j = p.length - 1; i < p.length; j = i++) {
    if (p[i][1] > y !== p[j][1] > y && x < ((p[j][0] - p[i][0]) * (y - p[i][1])) / (p[j][1] - p[i][1]) + p[i][0]) r = !r;
  }
  return r;
};

/* Breaks slanted borders into short uneven steps, as ridge lines and rivers have. */
function roughen(path: string) {
  return path
    .split("M")
    .filter(Boolean)
    .map((sub) => {
      const v = (sub.match(/[\d.]+/g) || []).map(Number);
      let d = `M${v[0]} ${v[1]}`;
      for (let i = 2; i < v.length; i += 2) {
        const [x0, y0, x1, y1] = [v[i - 2], v[i - 1], v[i], v[i + 1]];
        const steps = Math.max(1, Math.round(Math.hypot(x1 - x0, y1 - y0) / 3));
        for (let s = 1; s <= steps; s++) {
          const t = s / steps;
          const w = s === steps ? 0 : 1.8;
          d += `L${(x0 + (x1 - x0) * t + (noise(x0, s, 1) - 0.5) * w).toFixed(1)} ${(y0 + (y1 - y0) * t + (noise(y0, s, 2) - 0.5) * w).toFixed(1)}`;
        }
      }
      return d;
    })
    .join("");
}

/* Irregular mesh of small tracts that fills one populated area. */
function mesh({ p, c, k }: Patch, n: number) {
  const xs = p.map((q) => q[0]);
  const ys = p.map((q) => q[1]);
  const x0 = Math.min(...xs) - c * noise(n, 1, 5);
  const y0 = Math.min(...ys) - c * noise(n, 2, 5);
  const w = Math.ceil((Math.max(...xs) - x0) / c);
  const h = Math.ceil((Math.max(...ys) - y0) / c);
  const at = (i: number, j: number): Pt => [x0 + (i + noise(i, j, n) * 1.1) * c, y0 + (j + noise(j, i, n + 9) * 1.1) * c];
  let d = "";
  for (let i = 0; i <= w; i++)
    for (let j = 0; j <= h; j++) {
      const [x, y] = at(i, j);
      if (!inside(x, y, p)) continue;
      for (const [di, dj] of [[1, 0], [0, 1]]) {
        if (noise(i + di * 3, j + dj * 5, n + 20) > k) continue;
        const [u, v] = at(i + di, j + dj);
        const square = noise(i, j, n + 31) > 0.45;
        if (square) d += `M${x.toFixed(1)} ${y.toFixed(1)}H${u.toFixed(1)}V${v.toFixed(1)}`;
        else {
          const mx = (x + u) / 2 + (noise(i, j, n + 3) - 0.5) * c * 0.5;
          const my = (y + v) / 2 + (noise(j, i, n + 4) - 0.5) * c * 0.5;
          d += `M${x.toFixed(1)} ${y.toFixed(1)}L${mx.toFixed(1)} ${my.toFixed(1)} ${u.toFixed(1)} ${v.toFixed(1)}`;
        }
      }
    }
  return d;
}
const TRACTS = PATCHES.map((q, i) => mesh(q, i) + (q.n === 2 ? mesh(q, i + 100) : "")).join("");
const BORDERS = STRAIGHT + ROUGH.map(roughen).join("");

function MapCanvas() {
  return (
    <main className="mt-px min-w-0 flex-1 overflow-hidden border-t border-r border-l border-[#b5b1ad] bg-white pt-[227px] pl-[50px]">
      <svg viewBox="290 370 610 430" className="h-[430px] w-[610px] max-w-none" fill="none" stroke="#302c36" strokeWidth="1" strokeLinejoin="round" role="img" aria-label="Census tract boundaries">
        <clipPath id="land"><path d={LAND + ISLES} /></clipPath>
        <path d={LAND + ISLES} fill="#987db7" />
        <path d={BORDERS} clipPath="url(#land)" />
        <path d={TRACTS} strokeWidth=".9" clipPath="url(#land)" />
        <path d="M315 609q4 3 9 0l-3 1.500z" />
      </svg>
    </main>
  );
}

/* ---------- attribute table window ---------- */

const ROWS = [["071", "San Bernardino"], ["037", "Los Angeles"], ["025", "Imperial"], ["065", "Riverside"], ["059", "Orange"], ["111", "Ventura"]];
const Rule = () => <span className="mx-[3px] h-[11px] w-px shrink-0 bg-[#c9c5c1]" />;

function AttributeTable() {
  return (
    <aside className="flex w-[284px] shrink-0 flex-col overflow-hidden border-t-[3px] border-l-[3px] border-[#28567c] bg-white">
      <div className="flex h-8 shrink-0 items-center overflow-hidden border-b border-[#b5b1ad] bg-[#eeebe7] pb-0.5 pl-[3px]">
        <Small label="Toggle editing" off><path d="M11 2l3 1.500L6 14l-4 1.500 1-4z" fill="#c9c38f" stroke="#666" /></Small>
        <Small label="Multi edit" off><path d="M1.500 2.500h13v3h-13zM1.500 6.500h13v3h-13zM1.500 10.500h13v3h-13z" fill="#c9c38f" stroke="#888" /><path d="M12 1l3 1.500L8 14l-3 1z" fill="#ddd" stroke="#666" /></Small>
        <Small label="Save edits" off><g transform="scale(.667)" className="grayscale"><Floppy /></g></Small>
        <Small label="Reload the table"><g transform="scale(.667)"><RefreshShape /></g></Small>
        <Rule />
        <Small label="Copy rows" off><path d="M6.500 1.500h5l3 3v8h-8z" fill="#f4f4f4" stroke="#888" /><path d="M2.500 4.500h5l3 3v7h-8z" fill="#f8f8f8" stroke="#555" /></Small>
        <Rule />
        <Small label="Select by expression"><path d="M4.500 5.500h10v8h-10z" fill="#fde94b" stroke="#c8a406" /><text x="0" y="9" fontSize="13" fontWeight="bold" fill="#6d3c74" className="font-[DejaVu_Serif]">ε</text></Small>
        <Small label="Select all"><path d="M1.500 1.500h13v3.500h-13zM1.500 6h13v3.500h-13zM1.500 10.500h13V14h-13z" fill="#fde94b" stroke="#c8a406" /></Small>
        <Small label="Invert selection"><path d="M1.500 1.500h13v13z" fill="#e8e8e8" stroke="#999" /><path d="M1.500 1.500v13h13z" fill="#fde94b" stroke="#c8a406" /></Small>
        <Small label="Deselect all"><path d="M1.500 1.500h9v9h-9z" fill="#fde94b" stroke="#c8a406" /><rect x="8" y="8" width="8" height="8" rx="1" fill="#e0474c" /><circle cx="12" cy="12" r="2.500" stroke="#fff" /><path d="M10 14l4-4" stroke="#fff" /></Small>
        <Small label="Filter selection"><FunnelShape /></Small>
        <Small label="Move selection to top"><path d="M2.500 1.500h12v12h-12z" fill="#6d97c4" stroke="#41678f" /><path d="M4 3h9v3H4z" fill="#fde94b" /><path d="M4 8.500h9M4 11h9" stroke="#dce8f3" /></Small>
      </div>
      <table className="w-full table-fixed border-separate border-spacing-0 text-left">
        <colgroup><col className="w-[14px]" /><col className="w-[100px]" /><col className="w-[100px]" /><col /></colgroup>
        <thead>
          <tr className="h-[19px] *:p-0 *:pt-0.5 *:font-normal">
            <td className="border-b border-[#b5b1ad] bg-linear-to-b from-[#f8f6f4] to-[#ebe8e4]" />
            <th scope="col" className="border-r border-b border-[#b5b1ad] bg-linear-to-b from-[#f8f6f4] to-[#ebe8e4] text-center">Code</th>
            <th scope="col" className="border-b border-[#b5b1ad] bg-linear-to-b from-[#f8f6f4] to-[#ebe8e4] text-center">CountyName</th>
            <td className="bg-[#eeebe7]" />
          </tr>
        </thead>
        <tbody>
          {ROWS.map(([code, name], i) => (
            <tr key={code} className="h-[30px] *:p-0">
              <th scope="row" className="border-r border-b border-[#b5b1ad] bg-linear-to-b from-[#f8f6f4] to-[#ebe8e4] text-center font-normal"><span className="block pt-[3px]">{i + 1}</span></th>
              <td className={"border-r border-b border-[#bfbcb9] " + (i % 2 ? "bg-[#f6f5f3]" : "bg-white")}><span className="block pt-px pl-[3px]">{code}</span></td>
              <td className={"border-r border-b border-[#bfbcb9] " + (i % 2 ? "bg-[#f6f5f3]" : "bg-white")}><span className="block pt-px pl-[3px] whitespace-nowrap">{name}</span></td>
              <td />
            </tr>
          ))}
        </tbody>
      </table>
      <div className="w-[14px] flex-1 bg-[#eeebe7]" />
    </aside>
  );
}

export default function App() {
  return (
    <div className="flex h-screen flex-col overflow-hidden bg-[#222] font-['DejaVu_Sans',sans-serif] text-[12px] leading-[15px] text-[#141414]">
      <div className="flex h-0.5 shrink-0 bg-[#002b36]">
        <span className="ml-[77px] h-px w-[19px] bg-[#fdf6d8]" />
        <span className="mr-[150px] ml-auto h-px w-[173px] bg-[#d33682]" />
      </div>
      <div className="flex min-h-0 flex-1">
        <div className="mt-[3px] mr-[3px] flex min-w-0 flex-1 flex-col bg-[#eeebe7]">
          <nav className="flex h-5 shrink-0 items-center gap-px border-b border-[#d4d0cc] pt-0.5 pl-0.5">
            {MENU.map(([a, b, c]) => (
              <button type="button" key={a + b + c} className="px-[7px]">
                {a}<span className="underline underline-offset-2">{b}</span>{c}
              </button>
            ))}
          </nav>
          <FileBar />
          <EditBar />
          <PluginBar />
          <div className="flex min-h-0 flex-1">
            <div className="flex w-[233px] shrink-0 flex-col">
              <Browser />
              <div className="flex h-[5px] shrink-0 items-center justify-center">
                <span className="w-[17px] border-t border-dotted border-[#a9a5a1]" />
              </div>
              <Layers />
            </div>
            <div className="flex w-[6px] shrink-0 items-center justify-center">
              <span className="h-[17px] border-l border-dotted border-[#a9a5a1]" />
            </div>
            <MapCanvas />
          </div>
        </div>
        <AttributeTable />
      </div>
    </div>
  );
}
